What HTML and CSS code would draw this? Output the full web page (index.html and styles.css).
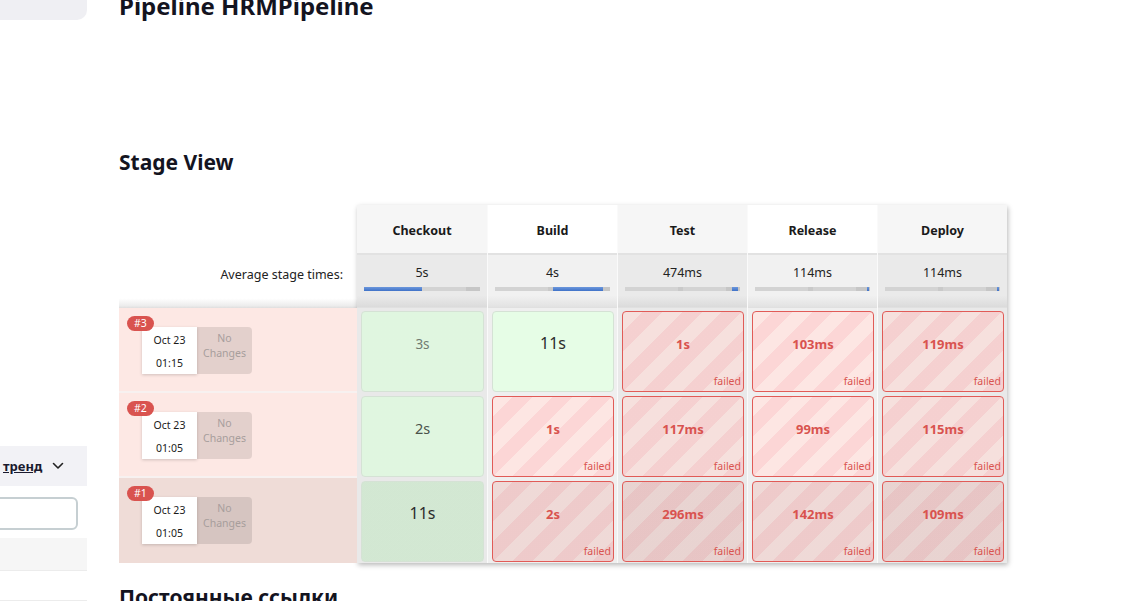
FILE: index.html
```html
<!DOCTYPE html>
<html lang="ru">
<head>
<meta charset="utf-8">
<title>Pipeline HRMPipeline</title>
<link rel="stylesheet" href="styles.css">
</head>
<body>
<div class="page">
  <aside class="sidebar">
    <div class="side-top"></div>
    <div class="side-trend">
      <span class="trend-link">тренд</span>
      <svg class="chev" width="12" height="8" viewBox="0 0 12 8"><path d="M1.5 1.5 L6 6 L10.5 1.5" fill="none" stroke="#222" stroke-width="1.6" stroke-linecap="round" stroke-linejoin="round"/></svg>
    </div>
    <div class="side-input"></div>
    <div class="side-row"></div>
    <div class="side-row2"></div>
  </aside>
  <main class="main">
    <h1 class="title">Pipeline HRMPipeline</h1>
    <h2 class="section">Stage View</h2>
    <div class="stage-view">
      <div class="labels">
        <div class="lbl-head"></div>
        <div class="lbl-avg">Average stage times:</div>
        <div class="lbl-run">
          <span class="badge">#3</span>
          <div class="run-box">
            <div class="run-date"><span>Oct 23</span><span>01:15</span></div>
            <div class="run-changes">No<br>Changes</div>
          </div>
        </div>
        <div class="lbl-run">
          <span class="badge">#2</span>
          <div class="run-box">
            <div class="run-date"><span>Oct 23</span><span>01:05</span></div>
            <div class="run-changes">No<br>Changes</div>
          </div>
        </div>
        <div class="lbl-run hover">
          <span class="badge">#1</span>
          <div class="run-box">
            <div class="run-date"><span>Oct 23</span><span>01:05</span></div>
            <div class="run-changes">No<br>Changes</div>
          </div>
        </div>
      </div>
      <div class="stages">
        <div class="col odd">
          <div class="head">Checkout</div>
          <div class="avg"><span>5s</span><div class="bar"><i style="left:0%;width:50%"></i></div></div>
          <div class="slot"><div class="cell ok"><span class="dur-s">3s</span></div></div>
          <div class="slot"><div class="cell ok"><span class="dur-m">2s</span></div></div>
          <div class="slot"><div class="cell ok hover"><span class="dur-l">11s</span></div></div>
        </div>
        <div class="col">
          <div class="head">Build</div>
          <div class="avg"><span>4s</span><div class="bar"><i style="left:50%;width:44%"></i></div></div>
          <div class="slot"><div class="cell ok"><span class="dur-l">11s</span></div></div>
          <div class="slot"><div class="cell fail"><b>1s</b><em>failed</em></div></div>
          <div class="slot"><div class="cell fail hover"><b>2s</b><em>failed</em></div></div>
        </div>
        <div class="col odd">
          <div class="head">Test</div>
          <div class="avg"><span>474ms</span><div class="bar"><i style="left:93%;width:5%"></i></div></div>
          <div class="slot"><div class="cell fail"><b>1s</b><em>failed</em></div></div>
          <div class="slot"><div class="cell fail"><b>117ms</b><em>failed</em></div></div>
          <div class="slot"><div class="cell fail hover"><b>296ms</b><em>failed</em></div></div>
        </div>
        <div class="col">
          <div class="head">Release</div>
          <div class="avg"><span>114ms</span><div class="bar"><i style="left:97.5%;width:1.5%"></i></div></div>
          <div class="slot"><div class="cell fail"><b>103ms</b><em>failed</em></div></div>
          <div class="slot"><div class="cell fail"><b>99ms</b><em>failed</em></div></div>
          <div class="slot"><div class="cell fail hover"><b>142ms</b><em>failed</em></div></div>
        </div>
        <div class="col odd">
          <div class="head">Deploy</div>
          <div class="avg"><span>114ms</span><div class="bar"><i style="left:97.5%;width:1.5%"></i></div></div>
          <div class="slot"><div class="cell fail"><b>119ms</b><em>failed</em></div></div>
          <div class="slot"><div class="cell fail"><b>115ms</b><em>failed</em></div></div>
          <div class="slot"><div class="cell fail hover"><b>109ms</b><em>failed</em></div></div>
        </div>
      </div>
    </div>
    <h2 class="section bottom">Постоянные ссылки</h2>
  </main>
</div>
</body>
</html>
```
FILE: styles.css
```css
* { box-sizing: border-box; }
html, body { margin: 0; padding: 0; }
body {
  font-family: "Noto Sans", "Open Sans", sans-serif;
  color: #14141f;
  background: #fff;
  width: 1132px;
  height: 601px;
  overflow: hidden;
}
.page { display: flex; gap: 32px; }

/* sidebar */
.sidebar { width: 87px; flex: none; display: flex; flex-direction: column; }
.side-top { height: 20px; background: #efeff3; border-bottom-right-radius: 10px; }
.side-trend {
  margin-top: 426px; height: 40px; background: #f2f2f6;
  display: flex; align-items: center; gap: 10px; padding-left: 3px;
}
.trend-link { font-size: 13px; font-weight: 700; text-decoration: underline; color: #1a1a2e; }
.chev { display: block; }
.side-input {
  margin-top: 11px; margin-left: -14px; width: 92px; height: 33px;
  border: 2px solid #c6cfd2; border-radius: 6px; background: #fff;
}
.side-row { margin-top: 8px; height: 33px; background: #f6f6f6; border-bottom: 1px solid #ececec; }
.side-row2 { margin-top: 29px; height: 10px; border-top: 1px solid #ececec; }

/* main */
.main { flex: 1; min-width: 0; }
.title { margin: -9px 0 0; font-size: 24px; line-height: 30px; font-weight: 700; }
.section { margin: 127px 0 0; font-size: 21px; line-height: 28px; font-weight: 700; }
.section.bottom { margin-top: 20px; }

.stage-view { margin-top: 29px; display: flex; align-items: flex-start; }
.labels { width: 238px; flex: none; display: flex; flex-direction: column; }
.lbl-head { height: 50px; }
.lbl-avg {
  height: 53px; padding: 11px 14px 0 0; text-align: right;
  font-size: 12.5px; line-height: 18px; color: #222;
  background: linear-gradient(to bottom, #fff 0, #fff 82%, #ececec 96%, #dedede 100%);
}
.lbl-run {
  height: 85px; position: relative; background: #fde8e4;
  border-bottom: 2px solid #f7f1f0; padding: 19px 0 0 23px;
}
.lbl-run.hover { background: #efdcd7; border-bottom: none; }
.badge {
  position: absolute; left: 8px; top: 8px; height: 15px; padding: 0 7px;
  border-radius: 8px; background: #d9534f; color: #fff;
  font-size: 10.5px; line-height: 15px;
}
.run-box { display: flex; height: 47px; }
.run-date {
  width: 55px; background: #fff; box-shadow: 0 1px 3px rgba(0,0,0,.18);
  display: flex; flex-direction: column; align-items: center;
  font-size: 10.5px; line-height: 23px; color: #1a1a1a; padding-top: 2px;
}
.run-changes {
  width: 55px; background: rgba(0,0,0,.1); border-radius: 0 4px 4px 0;
  text-align: center; font-size: 10.5px; line-height: 15px; color: #a79e9c; padding-top: 4px;
}

/* stage columns */
.stages { display: flex; box-shadow: 1px 2px 5px rgba(0,0,0,.28); }
.col {
  width: 130px; flex: none; display: flex; flex-direction: column;
  background: #efefef;
  --colshade: rgba(0,0,0,0);
}
.col + .col { border-left: 1px solid #fafafa; }
.col.odd { background: #e9e9e9; --colshade: rgba(0,0,0,.028); }
.head {
  height: 50px; display: flex; align-items: center; justify-content: center;
  background: #fff; font-size: 12.5px; font-weight: 700; color: #1a1a1a;
  border-bottom: 2px solid #e2e2e2; padding-top: 3px;
}
.col.odd .head { background: #f6f6f6; }
.avg {
  height: 53px; padding: 9px 7px 0; text-align: center;
  font-size: 12.5px; line-height: 18px; color: #222;
  background: linear-gradient(to bottom, #f1f1f1 0, #f1f1f1 78%, #e2e2e2 100%);
  border-bottom: 1px solid #e0e0e0;
}
.col.odd .avg { background: linear-gradient(to bottom, #eaeaea 0, #eaeaea 78%, #dbdbdb 100%); }
.avg span { display: block; }
.bar {
  position: relative; margin-top: 5px; height: 4px;
  background: linear-gradient(to right, #d3d3d3 0 46%, #c9c9c9 46% 50%, #d3d3d3 50% 88%, #c6c6c6 88% 100%);
}
.bar i {
  position: absolute; top: 0; bottom: 0; min-width: 1px;
  background: linear-gradient(to bottom, #6c97dc, #3f72c8);
}

.slot { height: 85px; padding: 3px 3px 1px 4px; }
.cell {
  height: 100%; border-radius: 4px; border: 1px solid; position: relative;
  text-align: center; padding-top: 21px; line-height: 20px;
  --rowshade: rgba(0,0,0,0);
}
.cell.hover { --rowshade: rgba(0,0,0,.055); }
.cell.ok {
  border-color: #d5e2d5;
  background: linear-gradient(var(--colshade), var(--colshade)),
              linear-gradient(var(--rowshade), var(--rowshade)), #e6fde6;
}
.cell.ok.hover { --rowshade: rgba(0,0,0,.06); }
.cell.fail {
  border-color: #e15b57;
  background: linear-gradient(var(--colshade), var(--colshade)),
              linear-gradient(var(--rowshade), var(--rowshade)),
              repeating-linear-gradient(135deg, #fde6e3 0 14px, #fcd6d6 14px 28px);
}
.dur-s { font-size: 13.5px; color: #707a70; }
.dur-m { font-size: 14.5px; color: #4a524a; }
.dur-l { font-size: 16px; color: #2c2c2c; }
.cell b { font-size: 13px; font-weight: 700; color: #d9534f; }
.cell em {
  position: absolute; right: 2px; bottom: 4px; font-style: normal;
  font-size: 10.5px; line-height: 12px; color: #d9534f;
}
```
